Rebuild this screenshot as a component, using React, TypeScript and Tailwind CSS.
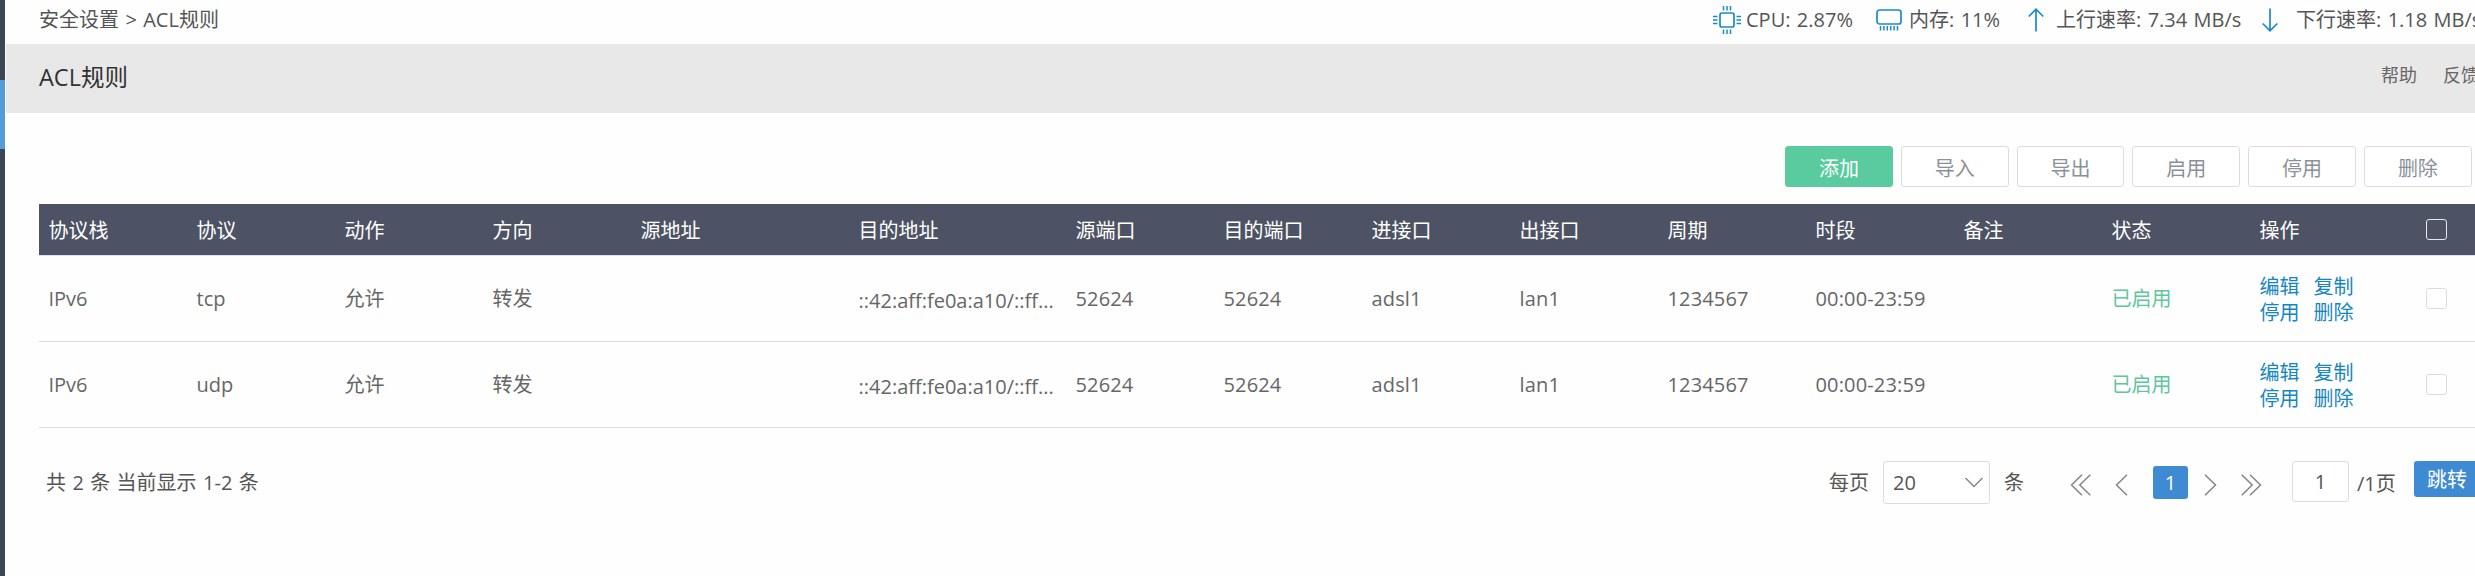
import React from "react";

const columns = ["协议栈", "协议", "动作", "方向", "源地址", "目的地址", "源端口", "目的端口", "进接口", "出接口", "周期", "时段", "备注", "状态", "操作"];
const rows = ["tcp", "udp"];
const grid =
  "grid grid-cols-[148px_148px_148px_148px_218px_217px_148px_148px_148px_148px_148px_148px_148px_148px_167px_1fr] items-center";

function CpuIcon() {
  return (
    <svg className="h-7 w-7" viewBox="0 0 28 28" fill="none" stroke="#1a8ac8" strokeWidth="1.5">
      <rect x="7" y="7" width="14" height="14" rx="2" strokeWidth="1.7" />
      <path d="M10.5 0v4.500M14 0v4.500M17.500 0v4.500M10.500 23.500V28M14 23.500V28M17.500 23.500V28M0 10.500h4.500M0 14h4.500M0 17.500h4.500M23.500 10.500H28M23.500 14H28M23.500 17.500H28" />
    </svg>
  );
}

function MemoryIcon() {
  return (
    <svg className="h-[22px] w-[26px]" viewBox="0 0 26 22" fill="none" stroke="#1a8ac8">
      <rect x="1" y="1" width="24" height="14" rx="2.500" strokeWidth="1.700" />
      <path d="M4.500 17v4.500M7.900 17v4.500M11.300 17v4.500M14.700 17v4.500M18.100 17v4.500M21.500 17v4.500" strokeWidth="1.500" />
    </svg>
  );
}

function Arrow({ down = false }: { down?: boolean }) {
  return (
    <svg className="h-6 w-4" viewBox="0 0 16 24" fill="none" stroke="#1a8ac8" strokeWidth="1.700">
      <path d={down ? "M8 .5V23M.7 15.500L8 22.800l7.300-7.300" : "M8 23.500V1M.7 8.500L8 1.200l7.300 7.300"} />
    </svg>
  );
}

function Chevron({ double = false, right = false }: { double?: boolean; right?: boolean }) {
  return (
    <svg
      className={`${double ? "w-[21px]" : "w-[13px]"} ${right ? "-scale-x-100" : ""} h-[22px] shrink-0`}
      viewBox={double ? "0 0 21 22" : "0 0 13 22"}
      fill="none"
      stroke="#858585"
      strokeWidth="1.500"
    >
      <path d="M12 .7L1.500 11 12 21.300" />
      {double && <path d="M20.300 .7L9.800 11l10.500 10.300" />}
    </svg>
  );
}

function Checkbox({ header = false }: { header?: boolean }) {
  return <span className={`${header ? "border-[#e4e6ea]" : "border-[#dcdcdc] bg-white"} block h-[21px] w-[21px] rounded-[3px] border`} />;
}

export default function App() {
  return (
    <div className="flex h-[576px] w-[2475px] overflow-hidden bg-[#fefefe] font-['Open_Sans','Noto_Sans_CJK_SC',sans-serif] text-[20px] leading-[26px] whitespace-nowrap text-[#555] [word-spacing:1.2px]">
      <aside className="mr-px w-[5px] shrink-0 bg-[#3b4656] pt-20">
        <div className="h-[69px] bg-[#529cd8]" />
      </aside>
      <main className="w-[2469px] shrink-0">
        <header className="flex h-[43.5px] items-center pb-1 pl-[33px] [&>*]:shrink-0">
          <div className="w-[1674px]">安全设置 &gt; ACL规则</div>
          <CpuIcon />
          <div className="w-[135px] pl-[5px]">CPU: 2.87%</div>
          <MemoryIcon />
          <div className="w-[126px] pl-[7px]">内存: 11%</div>
          <Arrow />
          <div className="w-[218px] pl-[12px]">上行速率: 7.34 MB/s</div>
          <Arrow down />
          <div className="pl-[18px]">下行速率: 1.18 MB/s</div>
        </header>
        <div className="flex h-[69.5px] items-center bg-[#e8e8e8] pb-0.5 pl-[33px] [&>*]:shrink-0">
          <h1 className="w-[2342px] text-[23.5px] text-[#333]">ACL规则</h1>
          <div className="flex gap-[26px] pb-1 text-[18px] text-[#666]">
            <span>帮助</span>
            <span>反馈</span>
          </div>
        </div>
        <div className="mt-[33px] ml-[1779px] flex h-[41px] gap-2">
          {["添加", "导入", "导出", "启用", "停用", "删除"].map((label, i) => (
            <button
              key={label}
              className={`${i === 0 ? "border-[#5acb9e] bg-[#5acb9e] text-white" : "border-[#dcdcdc] bg-white text-[#8a9099]"} flex w-[107.8px] shrink-0 items-center justify-center rounded-[3px] border pt-1`}
            >
              {label}
            </button>
          ))}
        </div>
        <section className="mt-[17px] ml-[33px] w-[2436px]">
          <div className={`${grid} h-[52px] border-b border-[#dbe0ee] bg-[#4d5364] text-white`}>
            {columns.map((c) => (
              <div key={c} className="pt-0.5 pl-[9.5px]">{c}</div>
            ))}
            <div className="pl-[9px]"><Checkbox header /></div>
          </div>
          {rows.map((protocol) => (
            <div key={protocol} className={`${grid} h-[86px] border-b border-[#dcdcdc] text-[#666]`}>
              {["IPv6", protocol, "允许", "转发", ""].map((v, i) => (
                <div key={i} className="pl-[9.5px]">{v}</div>
              ))}
              <div className="pt-1 pl-[9.5px]">::42:aff:fe0a:a10/::ff...</div>
              {["52624", "52624", "adsl1", "lan1", "1234567", "00:00-23:59", ""].map((v, i) => (
                <div key={i} className="pl-[9.5px] tracking-[0.15px]">{v}</div>
              ))}
              <div className="pl-[9.5px] text-[#5ec79b]">已启用</div>
              <div className="grid grid-cols-[54px_54px] pt-0.5 pl-[9.5px] text-[#1486c4]">
                {["编辑", "复制", "停用", "删除"].map((a) => (
                  <a key={a}>{a}</a>
                ))}
              </div>
              <div className="pl-[9px]"><Checkbox /></div>
            </div>
          ))}
        </section>
        <footer className="mt-[33px] flex h-[43px] items-center pl-[40px] [&>*]:shrink-0">
          <div className="w-[1783px]">共 2 条 当前显示 1-2 条</div>
          <div className="w-[54px]">每页</div>
          <div className="flex h-[43px] w-[107px] items-center justify-between rounded-[3px] border border-[#dcdcdc] bg-white pr-1.5 pl-[9px]">
            20
            <svg className="h-[11px] w-[18px]" viewBox="0 0 18 11" fill="none" stroke="#858585" strokeWidth="1.400">
              <path d="M.5 1L9 9.500 17.500 1" />
            </svg>
          </div>
          <div className="w-[80px] pl-[14px]">条</div>
          <div className="flex items-center pt-1">
            <Chevron double />
            <div className="w-[24px]" />
            <Chevron />
          </div>
          <div className="mr-4 ml-[25px] flex h-[33px] w-[35px] items-center justify-center rounded-[3px] bg-[#3f8bd3] text-white">1</div>
          <div className="flex items-center pt-1">
            <Chevron right />
            <div className="w-6" />
            <Chevron double right />
          </div>
          <div className="ml-[30px] flex h-[41px] w-[57px] items-center justify-center self-start rounded-[3px] border border-[#dcdcdc] bg-white">1</div>
          <div className="w-[65px] pt-0.5 pl-2">/1页</div>
          <div className="flex h-9 w-[68px] items-center self-start rounded-[3px] bg-[#3f8bd3] pt-0.5 pl-[13px] text-white">跳转</div>
        </footer>
      </main>
    </div>
  );
}
